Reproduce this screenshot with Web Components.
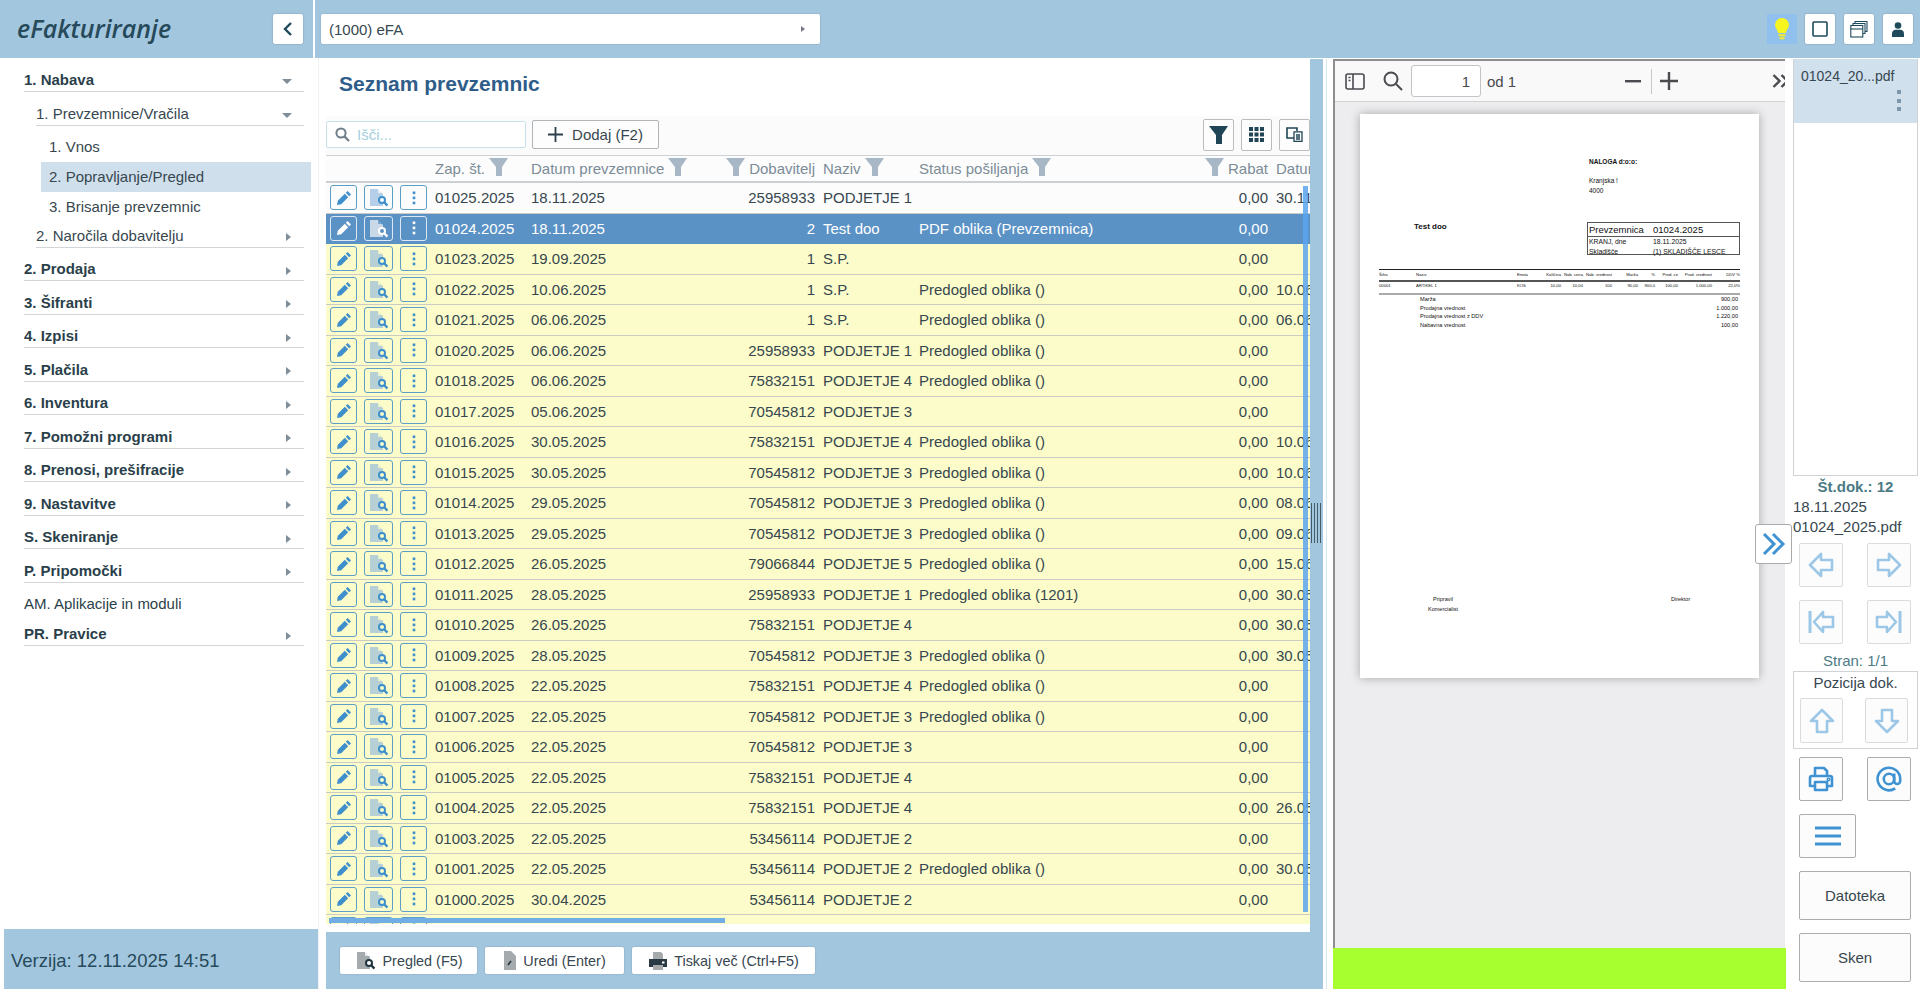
<!DOCTYPE html>
<html lang="sl">
<head>
<meta charset="utf-8">
<title>eFakturiranje</title>
<style>
  html, body { margin: 0; height: 100%; background: #fff; overflow: hidden; }
  body { font-family: "Liberation Sans", Arial, sans-serif; color: #37474f; --band: #a3c6df; }
  .work { display: flex; height: calc(100vh - 58px); }
</style>
</head>
<body>
<efa-header></efa-header>
<div class="work">
  <efa-sidenav>
    <nav-item level="0" caret="down">1. Nabava</nav-item>
    <nav-item level="1" caret="down">1. Prevzemnice/Vračila</nav-item>
    <nav-item level="2">1. Vnos</nav-item>
    <nav-item level="2" selected>2. Popravljanje/Pregled</nav-item>
    <nav-item level="2">3. Brisanje prevzemnic</nav-item>
    <nav-item level="1" caret="right">2. Naročila dobavitelju</nav-item>
    <nav-item level="0" caret="right">2. Prodaja</nav-item>
    <nav-item level="0" caret="right">3. Šifranti</nav-item>
    <nav-item level="0" caret="right">4. Izpisi</nav-item>
    <nav-item level="0" caret="right">5. Plačila</nav-item>
    <nav-item level="0" caret="right">6. Inventura</nav-item>
    <nav-item level="0" caret="right">7. Pomožni programi</nav-item>
    <nav-item level="0" caret="right">8. Prenosi, prešifracije</nav-item>
    <nav-item level="0" caret="right">9. Nastavitve</nav-item>
    <nav-item level="0" caret="right">S. Skeniranje</nav-item>
    <nav-item level="0" caret="right">P. Pripomočki</nav-item>
    <nav-item level="0" plain>AM. Aplikacije in moduli</nav-item>
    <nav-item level="0" caret="right">PR. Pravice</nav-item>
  </efa-sidenav>
  <efa-doclist></efa-doclist>
  <efa-splitter></efa-splitter>
  <efa-viewer></efa-viewer>
  <efa-panel></efa-panel>
</div>

<script>
// shared svg icons
const icons = {
  pencil: `<svg width="16" height="16" viewBox="0 0 16 16"><path fill="currentColor" d="M11.6 1 15 4.4l-1.8 1.8-3.4-3.4zM8.8 3.8l3.4 3.4-7 7L1 15l.8-4.2z"/></svg>`,
  doc: `<svg width="22" height="19" viewBox="0 0 22 19"><path fill="var(--doc)" d="M2 1h7l1 0 5 5v12H2z"/><path fill="var(--band2,#fff)" d="M10 0l5 5h-5z" opacity=".7"/><circle cx="14" cy="12" r="3" fill="var(--band2,#fff)" stroke="var(--lens)" stroke-width="2"/><path stroke="var(--lens)" stroke-width="2.4" d="M16 14l3.4 3.6"/></svg>`,
  kebab: `<svg width="4" height="14" viewBox="0 0 4 14"><rect x=".7" y=".5" width="2.6" height="2.6" fill="currentColor"/><rect x=".7" y="5.6" width="2.6" height="2.6" fill="currentColor"/><rect x=".7" y="10.7" width="2.6" height="2.6" fill="currentColor"/></svg>`,
  funnel: `<svg width="19" height="18" viewBox="0 0 19 18"><path fill="currentColor" d="M0 0h19l-6 9v9H7V9z"/></svg>`,
  search: `<svg width="15" height="15" viewBox="0 0 15 15"><circle cx="6" cy="6" r="4.6" fill="none" stroke="currentColor" stroke-width="2"/><path stroke="currentColor" stroke-width="2.2" d="M9.4 9.4l4.6 4.6"/></svg>`,
  left: `<path d="M3 14 14 3v6h11v10H14v6z"/>`,
  right: `<path d="M25 14 14 3v6H3v10h11v6z"/>`,
  first: `<path d="M3 3v22" stroke-width="3"/><path d="M7 14 16 4v5h10v10H16v5z"/>`,
  last: `<path d="M25 3v22" stroke-width="3"/><path d="M21 14 12 4v5H2v10h10v5z"/>`,
  up: `<path d="M14 3 25 14h-6v11H9V14H3z"/>`,
  down: `<path d="M14 25 3 14h6V3h10v11h6z"/>`,
  print: `<path d="M8 11V3h9l3 3v5M8 21H3v-8a2 2 0 0 1 2-2h18a2 2 0 0 1 2 2v8h-5M8 17h12v8H8z"/><circle cx="21.5" cy="14.5" r=".8"/>`,
  at: `<circle cx="14" cy="14" r="5.2"/><path d="M19.2 8.6V16a3 3 0 0 0 6 0v-2a11.3 11.3 0 1 0-5 9.4"/>`,
  menu: `<path d="M1 6h26M1 14h26M1 22h26" stroke-width="3"/>`
};

class BaseEl extends HTMLElement {
  constructor(){
    super();
    this.attachShadow({mode:"open"});
  }
  connectedCallback(){
    this.shadowRoot.innerHTML = `<style>${this.getStyles()}</style>${this.getTemplate()}`;
  }
  getStyles(){ return ""; }
  getTemplate(){ return "<slot></slot>"; }
}

class EfaHeader extends BaseEl {
  getStyles(){
    return `
      :host { display: flex; height: 58px; gap: 2px; }
      .brand { width: 313px; background: var(--band); display: flex; align-items: center; justify-content: space-between; padding: 0 10px 0 17px; box-sizing: border-box; }
      .logo { font: italic 600 25px "Open Sans", sans-serif; color: #264a5a; padding-bottom: 3px; }
      .tile { width: 30px; height: 30px; background: #fff; border-radius: 2px; box-shadow: 0 0 2px rgba(0,0,0,.25); display: flex; align-items: center; justify-content: center; color: #1f4a5c; }
      .bar { flex: 1; background: var(--band); display: flex; align-items: center; padding: 0 7px 0 6px; }
      .company { width: 499px; height: 30px; background: #fff; border-radius: 2px; box-shadow: 0 0 2px rgba(0,0,0,.2); display: flex; align-items: center; justify-content: space-between; padding: 0 15px 0 8px; box-sizing: border-box; font-size: 15px; color: #37474f; }
      .company i { border-left: 4px solid #778; border-top: 3px solid transparent; border-bottom: 3px solid transparent; }
      .tools { margin-left: auto; display: flex; gap: 9px; }
      .bulb { background: #8fc0ee; box-shadow: none; margin-right: -1px; border-radius: 0; }
    `;
  }
  getTemplate(){
    return `
      <div class="brand">
        <span class="logo">eFakturiranje</span>
        <span class="tile"><svg width="12" height="16" viewBox="0 0 12 16"><path d="M9 2 3 8l6 6" fill="none" stroke="currentColor" stroke-width="2.4"/></svg></span>
      </div>
      <div class="bar">
        <div class="company"><span>(1000) eFA</span><i></i></div>
        <div class="tools">
          <span class="tile bulb"><svg width="16" height="24" viewBox="0 0 16 24"><path fill="#f7f520" d="M8 1a7 7 0 0 1 7 7c0 3-2.600 4.500-3 8H4C3.600 12.500 1 11 1 8a7 7 0 0 1 7-7z"/><rect x="4.500" y="17" width="7" height="2.400" fill="#e6e640"/><rect x="5.500" y="20" width="5" height="2.400" fill="#e6e640"/></svg></span>
          <span class="tile"><svg width="16" height="16" viewBox="0 0 16 16"><rect x="1" y="1" width="14" height="14" rx="1" fill="none" stroke="currentColor" stroke-width="1.600"/></svg></span>
          <span class="tile"><svg width="18" height="18" viewBox="0 0 18 18" fill="none" stroke="currentColor" stroke-width="1.100"><path d="M5 3V1.500h12v10h-2M3 5V3.500h12v10h-2"/><rect x=".8" y="5.500" width="12" height="11.500"/><path d="M.8 9h12"/></svg></span>
          <span class="tile"><svg width="12" height="15" viewBox="0 0 12 15"><circle cx="6" cy="3.500" r="3.300" fill="currentColor"/><path fill="currentColor" d="M0 15v-3.500C0 9 2 7.800 3.500 7.800h5C10 7.800 12 9 12 11.500V15z"/></svg></span>
        </div>
      </div>
    `;
  }
}

class EfaSidenav extends BaseEl {
  getStyles(){
    return `
      :host { display: flex; flex-direction: column; width: 318px; flex: none; }
      nav { flex: 1; padding-right: 14px; }
      .version { margin-left: 4px; height: 60px; background: var(--band); display: flex; align-items: center; padding-left: 7px; padding-top: 4px; box-sizing: border-box; font-size: 18.500px; color: #264a5a; }
    `;
  }
  getTemplate(){
    return `<nav><slot></slot></nav><div class="version">Verzija: 12.11.2025 14:51</div>`;
  }
}

class NavItem extends BaseEl {
  getStyles(){
    return `
      :host { display: block; }
      .row { display: flex; justify-content: space-between; align-items: center; box-sizing: border-box; line-height: 22px; font-size: 15px; color: #37474f; }
      .l0 { margin: 4.500px 0 0 24px; padding-top: 6px; border-bottom: 1px solid #d2d6d9; font-weight: bold; color: #2a3f4a; }
      .plain { border: 0; font-weight: normal; margin-bottom: -2.500px; }
      .l1 { margin: 0 0 0 36px; padding-top: 3px; border-bottom: 1px solid #d2d6d9; }
      .l1.open { margin-top: 8px; margin-bottom: 6px; }
      .l2 { margin: 0 -7px 0 41px; height: 30px; padding-left: 8px; }
      .selected { background: #cfdfec; }
      i { width: 0; height: 0; margin-right: 13px; }
      .right { border-left: 5px solid #7f8e98; border-top: 4.500px solid transparent; border-bottom: 4.500px solid transparent; margin-top: 3px; }
      .down { border-top: 5px solid #7f8e98; border-left: 5px solid transparent; border-right: 5px solid transparent; margin: 3px 12px 0 0; }
    `;
  }
  getTemplate(){
    const level = this.getAttribute("level");
    const caret = this.getAttribute("caret");
    const cls = ["row", "l" + level];
    if (this.hasAttribute("selected")) cls.push("selected");
    if (this.hasAttribute("plain")) cls.push("plain");
    if (level === "1" && caret === "down") cls.push("open");
    return `<div class="${cls.join(" ")}"><span><slot></slot></span>${caret ? `<i class="${caret}"></i>` : ""}</div>`;
  }
}

const cols = "grid-template-columns: 105px 96px 164px 128px 96px 266px 91px 140px;";

class EfaDoclist extends BaseEl {
  getStyles(){
    return `
      :host { display: flex; flex-direction: column; width: 992px; flex: none; box-sizing: border-box; padding-left: 7px; border-left: 1px solid #f1f1f1; }
      h1 { margin: 0; height: 58px; box-sizing: border-box; padding: 14px 0 0 13px; font-size: 21px; line-height: 24px; color: #2f5d8a; }
      .tools { height: 39px; background: #fbfbfc; display: flex; align-items: center; box-sizing: border-box; padding-bottom: 2px; }
      .find { width: 200px; height: 27px; box-sizing: border-box; border: 1px solid #c9dfe9; border-radius: 2px; background: #fff; display: flex; align-items: center; gap: 7px; padding-left: 8px; color: #6f7f88; font-size: 15px; }
      .find span { color: #a6cfdc; }
      .add { margin-left: 6px; width: 127px; height: 29px; box-sizing: border-box; border: 1px solid #aeb4b8; border-radius: 2px; display: flex; align-items: center; justify-content: center; gap: 9px; font-size: 15px; color: #37474f; background: #fdfdfd; }
      .add svg { color: #2a3f4a; }
      .right { margin-left: auto; display: flex; gap: 7px; margin-right: 0; }
      .square { width: 31px; height: 32px; box-sizing: border-box; border: 1px solid #b9bdc0; border-radius: 2px; display: flex; align-items: center; justify-content: center; color: #1f4556; background: #fdfdfd; }
      .grid { flex: 1; min-height: 0; position: relative; overflow: hidden; }
      .head { display: grid; ${cols} height: 28px; box-sizing: border-box; border-top: 1px solid #cfd2d4; border-bottom: 2px solid #cdd0d2; font-size: 15px; color: #7b8c98; background: #fcfcfc; }
      .head > div { display: flex; align-items: center; padding: 0 4px; gap: 4px; white-space: nowrap; }
      .head svg { color: #a8b7c5; margin-top: -3px; flex: none; }
      .head .end { justify-content: flex-end; }
      .vbar { position: absolute; right: 2px; top: 31px; width: 5px; height: 726px; background: #5ba5ee; opacity: .85; }
      .hbar { position: absolute; left: 3px; bottom: 1px; width: 396px; height: 5px; background: #72aee6; }
      .rows { height: calc(100% - 28px); overflow: hidden; }
      .foot { margin-top: 8px; height: 57px; background: var(--band); display: flex; align-items: center; gap: 8px; padding-left: 14px; }
      .foot span { height: 27px; background: #fff; border-radius: 2px; box-shadow: 0 0 2px rgba(0,0,0,.2); display: flex; align-items: center; justify-content: center; gap: 6px; font-size: 14.400px; color: #37474f; box-sizing: border-box; --doc: #a5aaad; --lens: #1f3440; }
    `;
  }
  getTemplate(){
    const h = (t, cl) => `<div class="${cl || ""}">${cl === "end" ? icons.funnel + t : t + icons.funnel}</div>`;
    const rows = data.map((r, i) => `<doc-row ${i === 0 ? 'tone="plain"' : i === 1 ? 'tone="sel"' : 'tone="due"'} data-r="${r.join("|")}"></doc-row>`).join("");
    return `
      <h1>Seznam prevzemnic</h1>
      <div class="tools">
        <div class="find">${icons.search}<span>Išči...</span></div>
        <div class="add"><svg width="15" height="15" viewBox="0 0 15 15"><path d="M7.500 0v15M0 7.500h15" stroke="currentColor" stroke-width="1.800"/></svg>Dodaj (F2)</div>
        <div class="right">
          <div class="square">${icons.funnel}</div>
          <div class="square"><svg width="15" height="15" viewBox="0 0 15 15"><path fill="currentColor" d="M0 0h4v4H0zM5.500 0h4v4h-4zM11 0h4v4h-4zM0 5.500h4v4H0zM5.500 5.500h4v4h-4zM11 5.500h4v4h-4zM0 11h4v4H0zM5.500 11h4v4h-4zM11 11h4v4h-4z"/></svg></div>
          <div class="square"><svg width="17" height="15" viewBox="0 0 17 15" fill="none" stroke="currentColor" stroke-width="1.600"><path d="M8 11H1V1h10v3"/><path d="M8 4.800h8v9.500H8zM10 8h4M10 10h4M10 12h4" stroke-width="1.300"/></svg></div>
        </div>
      </div>
      <div class="grid">
        <div class="head">
          <div></div>${h("Zap. št.")}${h("Datum prevzemnice")}${h("Dobavitelj", "end")}${h("Naziv")}${h("Status pošiljanja")}${h("Rabat", "end")}<div>Datum</div>
        </div>
        <div class="rows">${rows}<doc-row tone="due" data-r="|||||"></doc-row></div>
        <div class="vbar"></div>
        <div class="hbar"></div>
      </div>
      <div class="foot">
        <span style="width:137px"><svg width="22" height="21" viewBox="0 0 22 19">${icons.doc.replace(/<svg[^>]*>|<\/svg>/g, "")}</svg>Pregled (F5)</span>
        <span style="width:139px"><svg width="14" height="21" viewBox="0 0 14 21"><path fill="#a5aaad" d="M1 1h7l5 5v14H1z"/><path stroke="#1f3440" stroke-width="1.600" d="M5 15l3-4"/></svg>Uredi (Enter)</span>
        <span style="width:183px"><svg width="20" height="20" viewBox="0 0 20 20"><path fill="#a5aaad" d="M5 1h8l2 2v5H5z"/><path fill="#2a3a44" d="M1 8h18v8H1z"/><path fill="#a5aaad" d="M5 14h10v5H5z"/><rect x="14" y="10.500" width="2.500" height="2" fill="#fff"/></svg>Tiskaj več (Ctrl+F5)</span>
      </div>
    `;
  }
}

class DocRow extends BaseEl {
  getStyles(){
    const tone = this.getAttribute("tone");
    const bg = {plain: "#fcfcfd", sel: "#5b92c5", due: "#fbfcc9"}[tone];
    const sel = tone === "sel";
    return `
      :host { display: grid; ${cols} height: 30.500px; box-sizing: border-box; background: ${bg}; border-bottom: 1px solid ${sel ? "#5b92c5" : "#c9cbc4"}; font-size: 15px; color: ${sel ? "#fff" : "#37474f"}; --doc: ${sel ? "#c9d9e8" : tone === "plain" ? "#b5cfe9" : "#b7d0d6"}; --lens: ${sel ? "#fff" : "#3e8fcc"}; --band2: ${bg}; }
      .cell { padding: 0 4px; line-height: 29.500px; white-space: nowrap; overflow: hidden; }
      .end { text-align: right; }
      .acts { display: flex; align-items: center; gap: 7px; padding-left: 4px; }
      .act { width: 27px; height: 25px; box-sizing: border-box; border: 1px solid ${sel ? "#dbe8f2" : "#5c9fc6"}; border-radius: 3px; display: flex; align-items: center; justify-content: center; color: ${sel ? "#fff" : "#3e8fcc"}; }
      .act.wide { width: 29px; }
    `;
  }
  getTemplate(){
    const [zap, dat, dob, naz, st, dat2] = this.dataset.r.split("|");
    const rabat = zap ? "0,00" : "";
    return `
      <div class="acts">
        <span class="act">${icons.pencil}</span>
        <span class="act wide">${icons.doc}</span>
        <span class="act">${icons.kebab}</span>
      </div>
      <div class="cell">${zap}</div><div class="cell">${dat}</div><div class="cell end">${dob}</div><div class="cell">${naz}</div><div class="cell">${st}</div><div class="cell end">${rabat}</div><div class="cell">${dat2}</div>
    `;
  }
}

class EfaSplitter extends BaseEl {
  getStyles(){
    return `
      :host { display: block; width: 13px; flex: none; margin: 1px 10px 0 0; background: var(--band); position: relative; box-shadow: 3px 0 0 #fff, 4px 0 0 #d9e8ef; }
      .grip { position: absolute; left: 1px; top: 444px; width: 10px; height: 40px; background: repeating-linear-gradient(90deg, #455a64 0 1px, transparent 1px 3px); }
    `;
  }
  getTemplate(){ return `<div class="grip"></div>`; }
}

class EfaViewer extends BaseEl {
  getStyles(){
    return `
      :host { display: flex; flex-direction: column; width: 453px; flex: none; position: relative; margin-top: 1px; }
      .frame { flex: 1; min-height: 0; border-left: 2px solid #8e8e8e; border-top: 2px solid #8e8e8e; margin-right: 1px; display: flex; flex-direction: column; overflow: hidden; }
      .bar { height: 40px; flex: none; background: #f9f9fa; border-bottom: 1px solid #d4d4d6; display: flex; align-items: center; color: #4a4a4f; font-size: 15px; }
      .bar > * { flex: none; }
      .num { width: 70px; height: 32px; box-sizing: border-box; background: #fff; border: 1px solid #c4c4c6; border-radius: 3px; margin-left: 8px; display: flex; align-items: center; justify-content: flex-end; padding-right: 10px; }
      .stage { flex: 1; min-height: 0; background: #ededf0; padding: 12px 0 0 25px; }
      .green { height: 41px; flex: none; background: #a8ff2f; }
      .toggle { position: absolute; left: 422px; top: 465px; width: 37px; height: 40px; box-sizing: border-box; background: #fff; border: 1px solid #aaa; border-radius: 3px; display: flex; align-items: center; justify-content: center; color: #3f93d2; }
    `;
  }
  getTemplate(){
    return `
      <div class="frame">
        <div class="bar">
          <svg style="margin-left:10px" width="20" height="17" viewBox="0 0 20 17" fill="none" stroke="currentColor" stroke-width="1.600"><rect x="1" y="1" width="18" height="15" rx="2"/><path d="M8 1v15"/><path d="M3.500 4.500h2M3.500 7.500h2" stroke-width="1.300"/></svg>
          <svg style="margin-left:18px" width="20" height="20" viewBox="0 0 20 20" fill="none" stroke="currentColor" stroke-width="2"><circle cx="8" cy="8" r="6.500"/><path d="M13 13l6 6"/></svg>
          <span class="num">1</span>
          <span style="margin-left:6px">od 1</span>
          <svg style="margin-left:109px" width="16" height="3" viewBox="0 0 16 3"><rect width="16" height="2.400" fill="currentColor"/></svg>
          <span style="margin-left:10px;width:1px;height:25px;background:#c8c8cc"></span>
          <svg style="margin-left:8px" width="18" height="18" viewBox="0 0 18 18"><path d="M9 0v18M0 9h18" stroke="currentColor" stroke-width="2.400"/></svg>
          <svg style="margin-left:94px" width="17" height="14" viewBox="0 0 17 14" fill="none" stroke="currentColor" stroke-width="2.400"><path d="M1.500 1 7.500 7l-6 6M9.500 1l6 6-6 6"/></svg>
        </div>
        <div class="stage"><pdf-page></pdf-page></div>
      </div>
      <div class="green"></div>
      <div class="toggle"><svg width="24" height="24" viewBox="0 0 24 24" fill="none" stroke="currentColor" stroke-width="3"><path d="M2 2l10 10L2 22M11 2l10 10-10 10"/></svg></div>
    `;
  }
}

class PdfPage extends BaseEl {
  getStyles(){
    return `
      :host { display: block; width: 399px; height: 564px; background: #fff; box-shadow: 0 0 9px rgba(0,0,0,.3); color: #111; font-size: 6.500px; line-height: 10px; box-sizing: border-box; padding-top: 43px; overflow: hidden; }
      .firm { margin-left: 229px; height: 49px; }
      .firm b { display: block; margin-bottom: 9px; }
      .mid { display: flex; height: 33px; margin-top: 16px; }
      .to { width: 54px; margin-left: 54px; font-weight: bold; font-size: 8px; flex: none; }
      .doc { margin-left: 119px; width: 153px; height: 33px; box-sizing: border-box; border: 1px solid #555; }
      .doc div { display: grid; grid-template-columns: 64px 1fr; padding-left: 1px; white-space: nowrap; }
      .doc .big { font-size: 9.500px; line-height: 13px; border-bottom: 1px solid #555; }
      .doc .sm { font-size: 6.800px; line-height: 9.500px; }
      .tbl { margin: 14px 19px 0; }
      .line { display: grid; grid-template-columns: 37px 101px 22px 22px 22px 29px 26px 17px 23px 34px 1fr; font-size: 4.200px; white-space: nowrap; height: 10px; line-height: 9px; border-top: 1px solid #222; }
      .line.data { border-top: 2px solid #555; border-bottom: 2px solid #aaa; height: 11px; line-height: 8px; }
      .line span:nth-child(n+4) { text-align: right; }
      .sum { margin: 0 21px 0 60px; display: flex; justify-content: space-between; font-size: 5.600px; line-height: 8.700px; }
      .sign { display: flex; margin: 264px 0 0 63px; line-height: 10px; font-size: 5.500px; text-align: center; }
      .sign .a { width: 40px; }
      .sign .b { margin-left: 208px; }
    `;
  }
  getTemplate(){
    const sum = [["Marža","900,00"],["Prodajna vrednost","1.000,00"],["Prodajna vrednost z DDV","1.220,00"],["Nabavna vrednost","100,00"]];
    return `
      <div class="firm"><b>NALOGA d:o:o:</b>Kranjska !<br>4000</div>
      <div class="mid">
        <div class="to">Test doo</div>
        <div class="doc">
          <div class="big"><span>Prevzemnica</span><span>01024.2025</span></div>
          <div class="sm"><span>KRANJ, dne</span><span>18.11.2025</span></div>
          <div class="sm"><span>Skladišče</span><span>(1) SKLADIŠČE LESCE</span></div>
        </div>
      </div>
      <div class="tbl">
        <div class="line"><span>Šifra</span><span>Naziv</span><span>Enota</span><span>Količina</span><span>Nab. cena</span><span>Nab. vrednost</span><span>Marža</span><span>%</span><span>Prod. ce</span><span>Prod. vrednost</span><span>DDV %</span></div>
        <div class="line data"><span>00001</span><span>ARTIKEL 1</span><span>KOS</span><span>10,00</span><span>10,00</span><span>100</span><span>90,00</span><span>900,0</span><span>100,00</span><span>1.000,00</span><span>22,0%</span></div>
      </div>
      ${sum.map(s => `<div class="sum"><span>${s[0]}</span><span>${s[1]}</span></div>`).join("")}
      <div class="sign"><div class="a">Pripravil<br>Komercialist</div><div class="b">Direktor</div></div>
    `;
  }
}

class IconBtn extends BaseEl {
  getStyles(){
    const strong = this.hasAttribute("strong");
    const w = this.getAttribute("w") || 44;
    const h = this.getAttribute("h") || 44;
    return `
      :host { display: flex; align-items: center; justify-content: center; box-sizing: border-box; width: ${w}px; height: ${h}px; background: #fcfcfc; border: 1px solid ${strong ? "#a9adb0" : "#d9dbdc"}; border-radius: 2px; color: ${strong ? "#3f93d2" : "#9cc7e6"}; font-size: 15px; }
      svg { fill: none; stroke: currentColor; stroke-width: 2.600; stroke-linejoin: round; }
      span { color: #37474f; }
    `;
  }
  getTemplate(){
    const ic = this.getAttribute("icon");
    return ic ? `<svg width="28" height="28" viewBox="0 0 28 28">${icons[ic]}</svg>` : `<span><slot></slot></span>`;
  }
}

class EfaPanel extends BaseEl {
  getStyles(){
    return `
      :host { display: block; width: 134px; flex: none; box-sizing: border-box; padding: 1px 2px 0 7px; font-size: 15px; color: #37474f; }
      .thumbs { height: 417px; box-sizing: border-box; border: 1px solid #cfd3d6; border-top: 0; }
      .sel { height: 64px; background: #d0e0ed; position: relative; padding: 7px 0 0 7px; box-sizing: border-box; font-size: 14px; line-height: 20px; }
      .dots { position: absolute; right: 16px; top: 31px; width: 4px; display: flex; flex-direction: column; gap: 4.500px; }
      .dots i { height: 4px; background: #7f97ab; }
      .count { text-align: center; font-weight: bold; color: #4b7b85; line-height: 20px; font-size: 15px; height: 20px; margin-top: 1px; }
      .meta { line-height: 19.500px; white-space: nowrap; }
      .pair { display: flex; gap: 24px; padding-left: 6px; }
      .stran { text-align: center; color: #4b7b85; line-height: 20px; margin-top: 7px; }
      .pos { height: 78px; box-sizing: border-box; border: 1px solid #cfd3d6; text-align: center; line-height: 21px; }
      .pos .pair { gap: 22px; margin-top: 5px; }
      .wide { margin: 13px 0 0 6px; }
    `;
  }
  getTemplate(){
    return `
      <div class="thumbs"><div class="sel">01024_20...pdf<div class="dots"><i></i><i></i><i></i></div></div></div>
      <div class="count">Št.dok.: 12</div>
      <div class="meta">18.11.2025<br>01024_2025.pdf</div>
      <div class="pair" style="margin-top:7px"><icon-btn icon="left"></icon-btn><icon-btn icon="right"></icon-btn></div>
      <div class="pair" style="margin-top:13px"><icon-btn icon="first"></icon-btn><icon-btn icon="last"></icon-btn></div>
      <div class="stran">Stran: 1/1</div>
      <div class="pos">Pozicija dok.<div class="pair"><icon-btn icon="up" w="43" h="45"></icon-btn><icon-btn icon="down" w="43" h="45"></icon-btn></div></div>
      <div class="pair" style="margin-top:8px"><icon-btn icon="print" strong></icon-btn><icon-btn icon="at" strong></icon-btn></div>
      <icon-btn class="wide" style="display:flex" icon="menu" strong w="57"></icon-btn>
      <icon-btn class="wide" style="display:flex" w="112" h="49" strong>Datoteka</icon-btn>
      <icon-btn class="wide" style="display:flex" w="112" h="49" strong>Sken</icon-btn>
    `;
  }
}

const pr = "Predogled oblika ()";
const p = n => "PODJETJE " + n;
const data = [
  ["01025.2025","18.11.2025","25958933",p(1),"","30.11.2025"],
  ["01024.2025","18.11.2025","2","Test doo","PDF oblika (Prevzemnica)",""],
  ["01023.2025","19.09.2025","1","S.P.","",""],
  ["01022.2025","10.06.2025","1","S.P.",pr,"10.06.2025"],
  ["01021.2025","06.06.2025","1","S.P.",pr,"06.06.2025"],
  ["01020.2025","06.06.2025","25958933",p(1),pr,""],
  ["01018.2025","06.06.2025","75832151",p(4),pr,""],
  ["01017.2025","05.06.2025","70545812",p(3),"",""],
  ["01016.2025","30.05.2025","75832151",p(4),pr,"10.06.2025"],
  ["01015.2025","30.05.2025","70545812",p(3),pr,"10.06.2025"],
  ["01014.2025","29.05.2025","70545812",p(3),pr,"08.06.2025"],
  ["01013.2025","29.05.2025","70545812",p(3),pr,"09.06.2025"],
  ["01012.2025","26.05.2025","79066844",p(5),pr,"15.06.2025"],
  ["01011.2025","28.05.2025","25958933",p(1),"Predogled oblika (1201)","30.05.2025"],
  ["01010.2025","26.05.2025","75832151",p(4),"","30.05.2025"],
  ["01009.2025","28.05.2025","70545812",p(3),pr,"30.05.2025"],
  ["01008.2025","22.05.2025","75832151",p(4),pr,""],
  ["01007.2025","22.05.2025","70545812",p(3),pr,""],
  ["01006.2025","22.05.2025","70545812",p(3),"",""],
  ["01005.2025","22.05.2025","75832151",p(4),"",""],
  ["01004.2025","22.05.2025","75832151",p(4),"","26.05.2025"],
  ["01003.2025","22.05.2025","53456114",p(2),"",""],
  ["01001.2025","22.05.2025","53456114",p(2),pr,"30.05.2025"],
  ["01000.2025","30.04.2025","53456114",p(2),"",""]
];

customElements.define("efa-header", EfaHeader);
customElements.define("efa-sidenav", EfaSidenav);
customElements.define("nav-item", NavItem);
customElements.define("efa-doclist", EfaDoclist);
customElements.define("doc-row", DocRow);
customElements.define("efa-splitter", EfaSplitter);
customElements.define("efa-viewer", EfaViewer);
customElements.define("pdf-page", PdfPage);
customElements.define("icon-btn", IconBtn);
customElements.define("efa-panel", EfaPanel);
</script>
</body>
</html>
